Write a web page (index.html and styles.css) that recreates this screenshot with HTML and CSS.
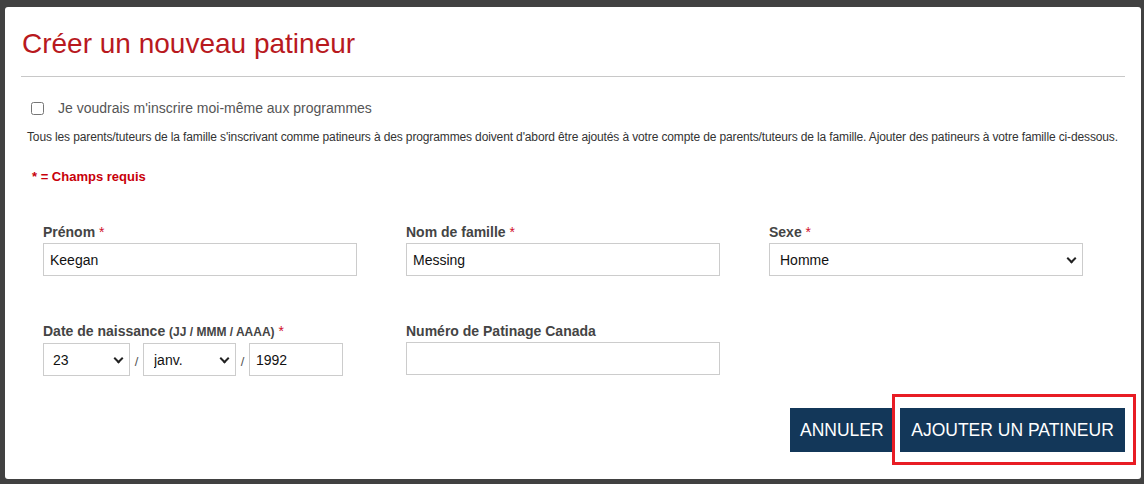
FILE: index.html
```html
<!DOCTYPE html>
<html lang="fr">
<head>
    <meta charset="UTF-8">
    <title>Créer un nouveau patineur</title>
    <link rel="stylesheet" href="styles.css">
</head>
<body>
    <div class="modal">
        <h1 class="modal-title">Créer un nouveau patineur</h1>
        <hr class="divider">

        <label class="self-check">
            <input type="checkbox">
            <span>Je voudrais m'inscrire moi-même aux programmes</span>
        </label>
        <p class="note">Tous les parents/tuteurs de la famille s'inscrivant comme patineurs à des programmes doivent d'abord être ajoutés à votre compte de parents/tuteurs de la famille. Ajouter des patineurs à votre famille ci-dessous.</p>
        <p class="required-note">* = Champs requis</p>

        <div class="form-grid">
            <div class="field">
                <label>Prénom <span class="req">*</span></label>
                <input type="text" class="control" value="Keegan">
            </div>
            <div class="field">
                <label>Nom de famille <span class="req">*</span></label>
                <input type="text" class="control" value="Messing">
            </div>
            <div class="field">
                <label>Sexe <span class="req">*</span></label>
                <div class="select-wrap">
                    <select class="control">
                        <option>Homme</option>
                        <option>Femme</option>
                    </select>
                </div>
            </div>

            <div class="field">
                <label>Date de naissance <small>(JJ / MMM / AAAA)</small> <span class="req">*</span></label>
                <div class="dob">
                    <div class="select-wrap day">
                        <select class="control"><option>23</option></select>
                    </div>
                    <span class="sep">/</span>
                    <div class="select-wrap month">
                        <select class="control"><option>janv.</option></select>
                    </div>
                    <span class="sep">/</span>
                    <input type="text" class="control year" value="1992">
                </div>
            </div>
            <div class="field">
                <label>Numéro de Patinage Canada</label>
                <input type="text" class="control">
            </div>
        </div>

        <div class="actions">
            <button class="btn cancel">ANNULER</button>
            <div class="highlight">
                <button class="btn">AJOUTER UN PATINEUR</button>
            </div>
        </div>
    </div>
</body>
</html>
```

FILE: styles.css
```css
body {
    margin: 0;
    background-color: #414141;
    font-family: 'Liberation Sans', Arial, sans-serif;
    padding: 7px 3px 5px 5px;
    height: 484px;
    box-sizing: border-box;
    overflow: hidden;
}
.modal {
    background-color: white;
    border-radius: 3px;
    height: 472px;
    padding: 0 16px 0 16px;
    box-sizing: border-box;
}
.modal-title {
    margin: 0;
    padding: 21px 0 0 1px;
    font-size: 28px;
    font-weight: normal;
    color: #b8191e;
    line-height: 32px;
}
.divider {
    border: none;
    border-top: 1px solid #c8c8c8;
    margin: 16px 0 0 0;
}
.self-check {
    display: flex;
    align-items: center;
    margin: 23px 0 0 10px;
    font-size: 14px;
    color: #555;
}
.self-check input {
    margin: 0 14px 0 0;
    width: 13px;
    height: 13px;
}
.note {
    margin: 14px 0 0 6px;
    font-size: 12px;
    letter-spacing: -0.13px;
    color: #333;
}
.required-note {
    margin: 25px 0 0 11px;
    font-size: 13px;
    font-weight: bold;
    color: #c8000a;
}
.form-grid {
    display: grid;
    grid-template-columns: 314px 314px 314px;
    column-gap: 49px;
    row-gap: 47px;
    margin: 40px 0 0 22px;
}
.field label {
    display: block;
    font-size: 14px;
    font-weight: bold;
    color: #444;
    margin-bottom: 3px;
    line-height: 16px;
}
.field label small {
    font-size: 12px;
}
.req {
    color: #d0102a;
    font-weight: normal;
}
.control {
    width: 100%;
    height: 33px;
    box-sizing: border-box;
    border: 1px solid #ccc;
    padding: 0 6px;
    font-family: 'Liberation Sans', Arial, sans-serif;
    font-size: 14px;
    color: #111;
    background-color: white;
    border-radius: 0;
}
.select-wrap {
    position: relative;
}
.select-wrap select {
    appearance: none;
    padding-left: 10px;
}
.select-wrap::after {
    content: "";
    position: absolute;
    right: 8px;
    top: 12px;
    width: 5px;
    height: 5px;
    border-right: 2px solid #222;
    border-bottom: 2px solid #222;
    transform: rotate(45deg);
    pointer-events: none;
}
.dob {
    display: flex;
    align-items: center;
}
.dob .day {
    width: 87px;
}
.dob .day select {
    padding-left: 9px;
}
.dob .month {
    width: 93px;
}
.dob .year {
    width: 94px;
}
.sep {
    width: 13px;
    text-align: center;
    color: #555;
    font-size: 13px;
    padding-top: 4px;
}
.actions {
    display: flex;
    justify-content: flex-end;
    align-items: flex-start;
    margin: 18px 0 0 0;
}
.btn {
    background-color: #133759;
    color: white;
    border: none;
    height: 44px;
    padding: 0 10px;
    font-family: 'Liberation Sans', Arial, sans-serif;
    font-size: 17.5px;
    cursor: pointer;
}
.cancel {
    margin-top: 14px;
    width: 102px;
    padding: 0 0 0 10px;
    text-align: left;
}
.highlight {
    border: 3px solid #e81c24;
    padding: 11px 8px 10px 5px;
    margin-right: -11px;
}
.highlight .btn {
    width: 225px;
}
```
